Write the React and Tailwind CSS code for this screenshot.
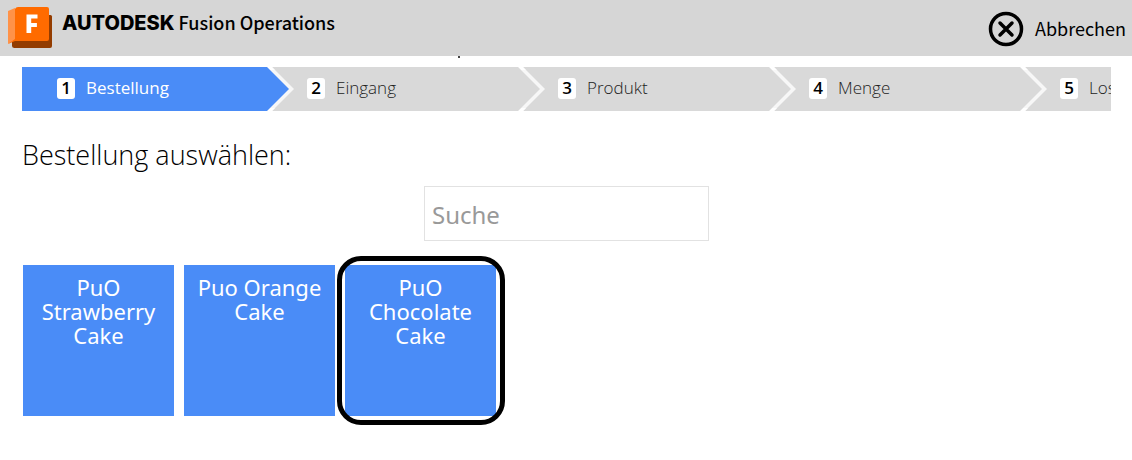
const steps = ["Bestellung", "Eingang", "Produkt", "Menge", "Los"];
const orders = [
  { name: "PuO Strawberry Cake" },
  { name: "Puo Orange Cake" },
  { name: "PuO Chocolate Cake", selected: true },
];

function Logo() {
  return (
    <svg viewBox="0 0 46 42" className="h-[42px] w-[46px] shrink-0" aria-hidden="true">
      <path d="M6 33 37 8h5.500q1.500 0 1.500 1.500V39q0 2-2 2H6.500Q4 41 4 39v-4z" fill="#933c00" />
      <path d="M0 4 7 1v32L0 37z" fill="#ff9248" />
      <path d="M7 2q1-2 3-2h29q2 0 2 2v30q0 2-2 2H7L0 37l7-5z" fill="#ff6b00" />
      <path d="M18.500 7.500h11v4h-6.300v4.500h5.700v4h-5.700V26h-4.700z" fill="#fff" />
    </svg>
  );
}

function Chevron({ active }) {
  return (
    <svg viewBox="0 0 27 44" className="h-full w-[27px] shrink-0" aria-hidden="true">
      <path d="M0 0h27v44H0z" fill="#d9d9d9" />
      <path d="M0 0h5l22 22L5 44H0z" fill="#f7f7f7" />
      <path d="M0 0h5l3 3H3zM0 44h5l3-3H3z" fill="#fff" />
      <path d="M0 0 22 22 0 44z" fill={active ? "#4a8cf7" : "#d9d9d9"} />
    </svg>
  );
}

function Step({ number, label, active, last }) {
  return (
    <li
      className={
        active
          ? "flex h-full w-[272px] shrink-0 items-center bg-[#4a8cf7] pl-[35px] text-white"
          : "flex h-full w-[251px] shrink-0 items-center bg-[#d9d9d9] pl-[13px] text-[#222]"
      }
      aria-current={active ? "step" : undefined}
    >
      <span className="mr-[11px] mb-px flex h-[21px] w-[18px] items-center justify-center rounded-[3px] bg-white pb-px text-[17px] font-semibold text-black">
        {number}
      </span>
      <span className={active ? "grow pb-[2px] text-[17px]" : "grow pb-[2px] text-[17px] font-light"}>{label}</span>
      {!last && <Chevron active={active} />}
    </li>
  );
}

export default function App() {
  return (
    <div className="min-h-screen bg-white font-['Open_Sans',sans-serif] text-black">
      <header className="flex h-14 items-center justify-between bg-[#d6d6d6] pr-[6px] pl-2">
        <div className="flex items-center gap-2">
          <Logo />
          <div className="flex items-baseline gap-1 pb-3 leading-6">
            <span className="font-['Inter',sans-serif] text-xl font-extrabold">AUTODESK</span>
            <span className="font-['Noto_Sans_CJK_JP',sans-serif] text-lg font-medium">Fusion Operations</span>
          </div>
        </div>
        <button type="button" className="flex items-center gap-[11px] pt-[2px] font-['Noto_Sans_CJK_JP',sans-serif] text-lg leading-6">
          <svg viewBox="0 0 36 36" className="size-9" fill="none" stroke="#000" aria-hidden="true">
            <circle cx="18" cy="18" r="15.500" strokeWidth="3.500" />
            <path d="m12 12 12 12M24 12 12 24" strokeWidth="3.500" strokeLinecap="round" />
          </svg>
          <span className="pb-[3px]">Abbrechen</span>
        </button>
      </header>

      <div className="flex h-[11px] justify-center pr-[214px]" aria-hidden="true">
        <span className="size-[2px] bg-[#444]" />
      </div>

      <main className="pr-[21px] pl-[22px]">
        <ol className="flex h-11 overflow-hidden">
          {steps.map((label, i) => (
            <Step key={label} number={i + 1} label={label} active={i === 0} last={i === steps.length - 1} />
          ))}
        </ol>

        <h1 className="mt-[26px] text-[27px] leading-9 font-light">Bestellung auswählen:</h1>

        <div className="mt-[13px] flex justify-center">
          <input
            type="search"
            aria-label="Suche"
            placeholder="Suche"
            className="h-[55px] w-[285px] border border-[#e2e2e2] px-[7px] pt-[2px] font-['Noto_Sans',sans-serif] text-2xl outline-none placeholder:text-[#999]"
          />
        </div>

        <div className="mt-6 flex flex-wrap gap-[10px] pl-px">
          {orders.map(({ name, selected }) => (
            <div key={name} className="relative">
              <button
                type="button"
                aria-pressed={!!selected}
                className="flex size-[151px] items-start justify-center bg-[#4a8cf7] px-2 pt-[10px] text-center font-['Noto_Sans',sans-serif] text-[22px] leading-6 text-white"
              >
                {name}
              </button>
              {selected && (
                <span className="pointer-events-none absolute -top-[9px] -right-[9px] -bottom-[9px] -left-2 rounded-[24px] border-[5px] border-black" />
              )}
            </div>
          ))}
        </div>
      </main>
    </div>
  );
}
